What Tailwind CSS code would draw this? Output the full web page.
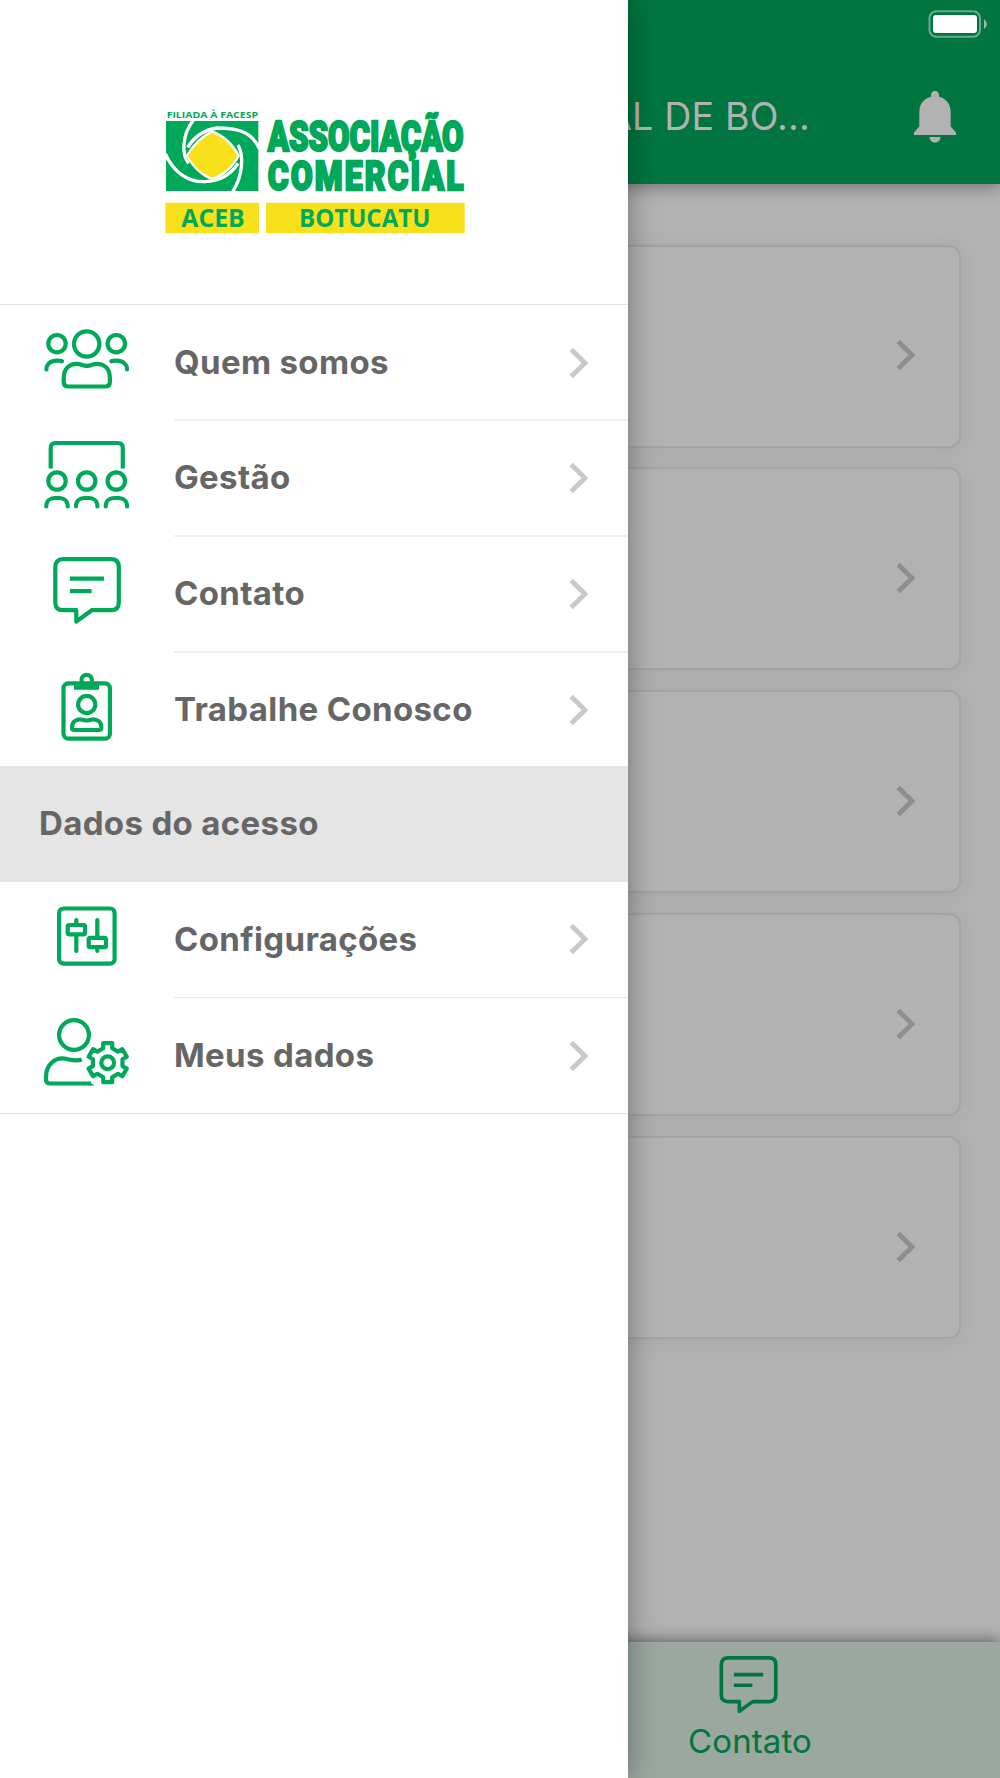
<!DOCTYPE html>
<html lang="pt-BR">
<head>
<meta charset="utf-8">
<title>Associação Comercial de Botucatu</title>
<script src="https://cdn.jsdelivr.net/npm/@tailwindcss/browser@4"></script>
</head>
<body class="relative h-[1778px] w-[1000px] overflow-hidden bg-[#b2b2b2] font-['Inter',sans-serif]">
<svg class="hidden">
  <symbol id="chev" viewBox="0 0 20 32"><path d="M2.200 2.500L16 16L2.200 29.500" fill="none" stroke="currentColor" stroke-width="4.800"/></symbol>
  <symbol id="chat" viewBox="53 20 68 70"><path d="M76.3 73.2H63Q55.3 73.2 55.3 65.5V30Q55.3 22.2 63 22.2H111Q118.8 22.2 118.8 30V65.5Q118.8 73.2 111 73.2H91.8L76.3 84.5Z" fill="none" stroke="currentColor" stroke-width="4.2" stroke-linejoin="round"/><path d="M72 41.7H102M72 54.2H89.5" fill="none" stroke="currentColor" stroke-width="4.2" stroke-linecap="square"/></symbol>
</svg>

<!-- dimmed page behind the drawer -->
<div class="flex h-full flex-col">
  <header class="relative z-10 h-[184px] shrink-0 bg-[#00753f] pl-[628px] shadow-[0_2px_16px_rgba(0,0,0,0.4)]">
    <div class="flex h-[48px] items-start justify-end pt-[10px] pr-[12px]">
      <svg class="h-[28px] w-[60px]" viewBox="0 0 60 28"><rect x="1.500" y="1.200" width="50.500" height="25.600" rx="7" fill="none" stroke="#6bad8b" stroke-width="2"/><rect x="5" y="5" width="44" height="18" rx="3" fill="#fff"/><path d="M56 9.3Q59 11 59 14T56 19Z" fill="#8cc0a5"/></svg>
    </div>
    <div class="flex h-[136px] items-start justify-between pt-[43px] pr-[43px]">
      <div class="flex h-[52px] w-[182px] items-center justify-end text-[37.5px] tracking-[0.2px] whitespace-nowrap text-[#b2b2b2]">COMERCIAL DE BO...</div>
      <svg class="h-[52px] w-[44px]" viewBox="0 0 44 52" fill="#b2b2b2"><path d="M22 0C19.6 0 18 1.600 18 4V5.800C11 7.500 6.300 13 6.300 21V35.500L1 41.500V44H43V41.500L37.700 35.500V21C37.700 13 33 7.500 26 5.800V4C26 1.600 24.400 0 22 0Z"/><path d="M16.500 46H27.500C27.500 49.500 25 51.500 22 51.500S16.500 49.500 16.500 46Z"/></svg>
    </div>
  </header>
  <main class="flex grow flex-col gap-[19.900px] pt-[60.500px] pr-[39px] pl-[40px] text-[#8e8e8e]">
    <div class="flex h-[203px] items-center justify-end rounded-xl border-2 border-[#a4a4a4] pt-[18px] pr-[43px] shadow-[0_2px_20px_rgba(0,0,0,0.06)]"><svg class="h-[32px] w-[20px]"><use href="#chev"/></svg></div>
    <div class="flex h-[203px] items-center justify-end rounded-xl border-2 border-[#a4a4a4] pt-[18px] pr-[43px] shadow-[0_2px_20px_rgba(0,0,0,0.06)]"><svg class="h-[32px] w-[20px]"><use href="#chev"/></svg></div>
    <div class="flex h-[203px] items-center justify-end rounded-xl border-2 border-[#a4a4a4] pt-[18px] pr-[43px] shadow-[0_2px_20px_rgba(0,0,0,0.06)]"><svg class="h-[32px] w-[20px]"><use href="#chev"/></svg></div>
    <div class="flex h-[203px] items-center justify-end rounded-xl border-2 border-[#a4a4a4] pt-[18px] pr-[43px] shadow-[0_2px_20px_rgba(0,0,0,0.06)]"><svg class="h-[32px] w-[20px]"><use href="#chev"/></svg></div>
    <div class="flex h-[203px] items-center justify-end rounded-xl border-2 border-[#a4a4a4] pt-[18px] pr-[43px] shadow-[0_2px_20px_rgba(0,0,0,0.06)]"><svg class="h-[32px] w-[20px]"><use href="#chev"/></svg></div>
  </main>
  <footer class="flex h-[136px] shrink-0 justify-end bg-[#9aa8a0] pr-[125px] text-[#00753f] shadow-[0_-2px_14px_rgba(0,0,0,0.45)]">
    <div class="flex w-[250px] flex-col items-center pt-[14px]">
      <svg class="mr-[3px] h-[60px] w-[59px]"><use href="#chat"/></svg>
      <span class="mt-[4px] text-[33px] leading-[42px] tracking-[0.1px]">Contato</span>
    </div>
  </footer>
</div>

<!-- drawer -->
<aside class="absolute inset-y-0 left-0 z-20 w-[628px] bg-white text-[33px] font-bold tracking-[0.35px] text-[#666] shadow-[0_0_28px_rgba(0,0,0,0.36)]">
  <div class="h-[305px] border-b border-[#e2e2e2] pt-[95px] pl-[150px] tracking-normal">
    <svg class="h-[150px] w-[330px] overflow-visible" viewBox="0 0 990 450" font-family="Inter,sans-serif" fill="#00a859">
      <text x="50" y="69" font-size="28" font-weight="700" font-family="Open Sans,sans-serif" textLength="274" lengthAdjust="spacingAndGlyphs">FILIADA À FACESP</text>
      <rect x="48" y="78" width="277" height="210"/>
      <g fill="none" stroke="#fff" stroke-width="10">
        <path d="M130 76C95 120 95 180 116 205"/>
        <path d="M46 176C70 235 120 262 165 260C215 258 245 235 264 205"/>
        <path d="M327 160C305 105 250 99 200 99C160 105 130 130 113 157"/>
        <path d="M248 290C280 240 281 180 264 150"/>
      </g>
      <path d="M107 182Q140 125 187 106Q240 125 270 182Q240 238 187 256Q137 238 107 182Z" fill="#fff"/>
      <path d="M114 182Q143 135 187 113Q235 132 262 182Q237 230 187 248Q140 230 114 182Z" fill="#f8e11a"/>
      <g font-family="Roboto,sans-serif" font-weight="900" stroke="#00a859" stroke-width="7">
        <text x="353" y="169" font-size="125" textLength="588" lengthAdjust="spacingAndGlyphs">ASSOCIAÇÃO</text>
        <text x="353" y="284" font-size="120" letter-spacing="8" textLength="594" lengthAdjust="spacingAndGlyphs">COMERCIAL</text>
      </g>
      <path d="M46 323H327V415H46ZM348 323H944V415H348Z" fill="#f8e11a"/>
      <g font-family="Open Sans,sans-serif" font-weight="700" font-size="74"><text x="94" y="395" textLength="190" lengthAdjust="spacingAndGlyphs">ACEB</text><text x="447" y="395" textLength="394" lengthAdjust="spacingAndGlyphs">BOTUCATU</text></g>
    </svg>
  </div>
  <nav class="text-[#666]">
    <a class="flex h-[116px] items-stretch"><svg class="h-[116px] w-[174px] shrink-0" viewBox="0 0 174 116" fill="none" stroke="#00a859" stroke-width="4.200"><circle cx="86.700" cy="39" r="12.700"/><circle cx="57" cy="38.700" r="8.700"/><circle cx="116.300" cy="38.700" r="8.700"/><path stroke-linecap="round" d="M46.400 64.500C46.400 59 50.500 55.700 57 55.700H58Q60.500 55.700 62 56.300M127 64.500C127 59 122.900 55.700 116.400 55.700H115.400Q112.900 55.700 111.400 56.300"/><path d="M63.700 77V73C63.700 64 69 58.800 77 58.800C81 58.800 82 60.800 86.800 60.800S92.600 58.800 96.600 58.800C104.600 58.800 109.900 64 109.900 73V77Q109.900 81.500 105.400 81.500H68.200Q63.700 81.500 63.700 77Z"/></svg><div class="flex grow items-center justify-between border-b-2 border-[#f0f0f0] pt-[1px] pr-[39px]"><span>Quem somos</span><svg class="h-[32px] w-[20px] text-[#c9c9c9]"><use href="#chev"/></svg></div></a>
    <a class="flex h-[116px] items-stretch"><svg class="h-[116px] w-[174px] shrink-0" viewBox="0 0 174 116" fill="none" stroke="#00a859" stroke-width="4.200"><path d="M50.700 47.500V27Q50.700 22 55.700 22H117.800Q122.800 22 122.800 27V47.500"/><circle cx="57" cy="60" r="8.700"/><circle cx="86.700" cy="60" r="8.700"/><circle cx="116.300" cy="60" r="8.700"/><path stroke-linecap="round" d="M46.300 85.500C46.300 80 50 77 54.500 77H59.500C64 77 67.700 80 67.700 85.500M76 85.500C76 80 79.700 77 84.200 77H89.200C93.700 77 97.400 80 97.400 85.500M105.700 85.500C105.700 80 109.400 77 113.900 77H118.900C123.400 77 127.100 80 127.100 85.500"/></svg><div class="flex grow items-center justify-between border-b-2 border-[#f0f0f0] pr-[39px]"><span>Gestão</span><svg class="h-[32px] w-[20px] text-[#c9c9c9]"><use href="#chev"/></svg></div></a>
    <a class="flex h-[115.500px] items-stretch"><span class="w-[174px] shrink-0 pt-[19.500px] pl-[53px] text-[#00a859]"><svg class="h-[70px] w-[68px]"><use href="#chat"/></svg></span><div class="flex grow items-center justify-between border-b-2 border-[#eee] pr-[39px]"><span>Contato</span><svg class="h-[32px] w-[20px] text-[#c9c9c9]"><use href="#chev"/></svg></div></a>
    <a class="flex h-[113.500px] items-stretch"><svg class="h-[116px] w-[174px] shrink-0" viewBox="0 0.500 174 116" fill="none" stroke="#00a859" stroke-width="4.200"><rect x="63.500" y="30.800" width="46.400" height="55.400" rx="5"/><circle cx="86.700" cy="27.500" r="5.200"/><path d="M74 34.500H99" stroke-width="5.500"/><circle cx="86.700" cy="52" r="8.600"/><path d="M72 75C72 69.500 76 66.800 80 66.800C83 66.800 84 68 86.700 68S90.400 66.800 93.400 66.800C97.400 66.800 101.400 69.500 101.400 75Q101.400 77.500 98.900 77.500H74.500Q72 77.500 72 75Z"/></svg><div class="flex grow items-center justify-between pt-[1px] pr-[39px]"><span>Trabalhe Conosco</span><svg class="h-[32px] w-[20px] text-[#c9c9c9]"><use href="#chev"/></svg></div></a>
    <div class="flex h-[116px] items-center bg-[#e5e5e5] pl-[39px]">Dados do acesso</div>
    <a class="flex h-[115.700px] items-stretch"><svg class="h-[116px] w-[174px] shrink-0" viewBox="0 0 174 116" fill="none" stroke="#00a859" stroke-width="4.200"><rect x="59.100" y="26.500" width="55.500" height="55.200" rx="4.500"/><path stroke-linecap="round" d="M76.300 38V43M76.300 53V69M97.300 38V56M97.300 65V69"/><rect x="67.700" y="43" width="17.300" height="9.300" rx="1.500"/><rect x="88.700" y="55.900" width="17.300" height="9.300" rx="1.500"/></svg><div class="flex grow items-center justify-between border-b border-[#e4e4e4] pr-[39px]"><span>Configurações</span><svg class="h-[32px] w-[20px] text-[#c9c9c9]"><use href="#chev"/></svg></div></a>
    <a class="flex h-[116px] items-stretch border-b border-[#e4e4e4]"><svg class="h-[116px] w-[174px] shrink-0" viewBox="0 0 174 116" fill="none" stroke="#00a859" stroke-width="4.200"><circle cx="74" cy="37" r="14.900"/><path d="M81.700 61.500C76 63.500 71 62 67 61C55 58 46 67 46 79V81.500Q46 85.500 50 85.500H91"/><path d="M88.500 83.400L94.500 87.600H88Z" fill="#00a859" stroke="none"/><g transform="translate(107.700 64.700)" stroke-linejoin="round"><circle r="6.400"/><path d="M-4.500 -19.500H4.500V-14.500L10.300 -11.100L14.600 -13.600L19.100 -5.900L14.800 -3.400V3.400L19.100 5.900L14.600 13.600L10.300 11.100L4.500 14.500V19.500H-4.500V14.500L-10.300 11.100L-14.600 13.600L-19.100 5.900L-14.800 3.400V-3.400L-19.100 -5.900L-14.600 -13.600L-10.300 -11.100L-4.500 -14.500Z"/></g></svg><div class="flex grow items-center justify-between pt-[1px] pr-[39px]"><span>Meus dados</span><svg class="h-[32px] w-[20px] text-[#c9c9c9]"><use href="#chev"/></svg></div></a>
  </nav>
</aside>
</body>
</html>
